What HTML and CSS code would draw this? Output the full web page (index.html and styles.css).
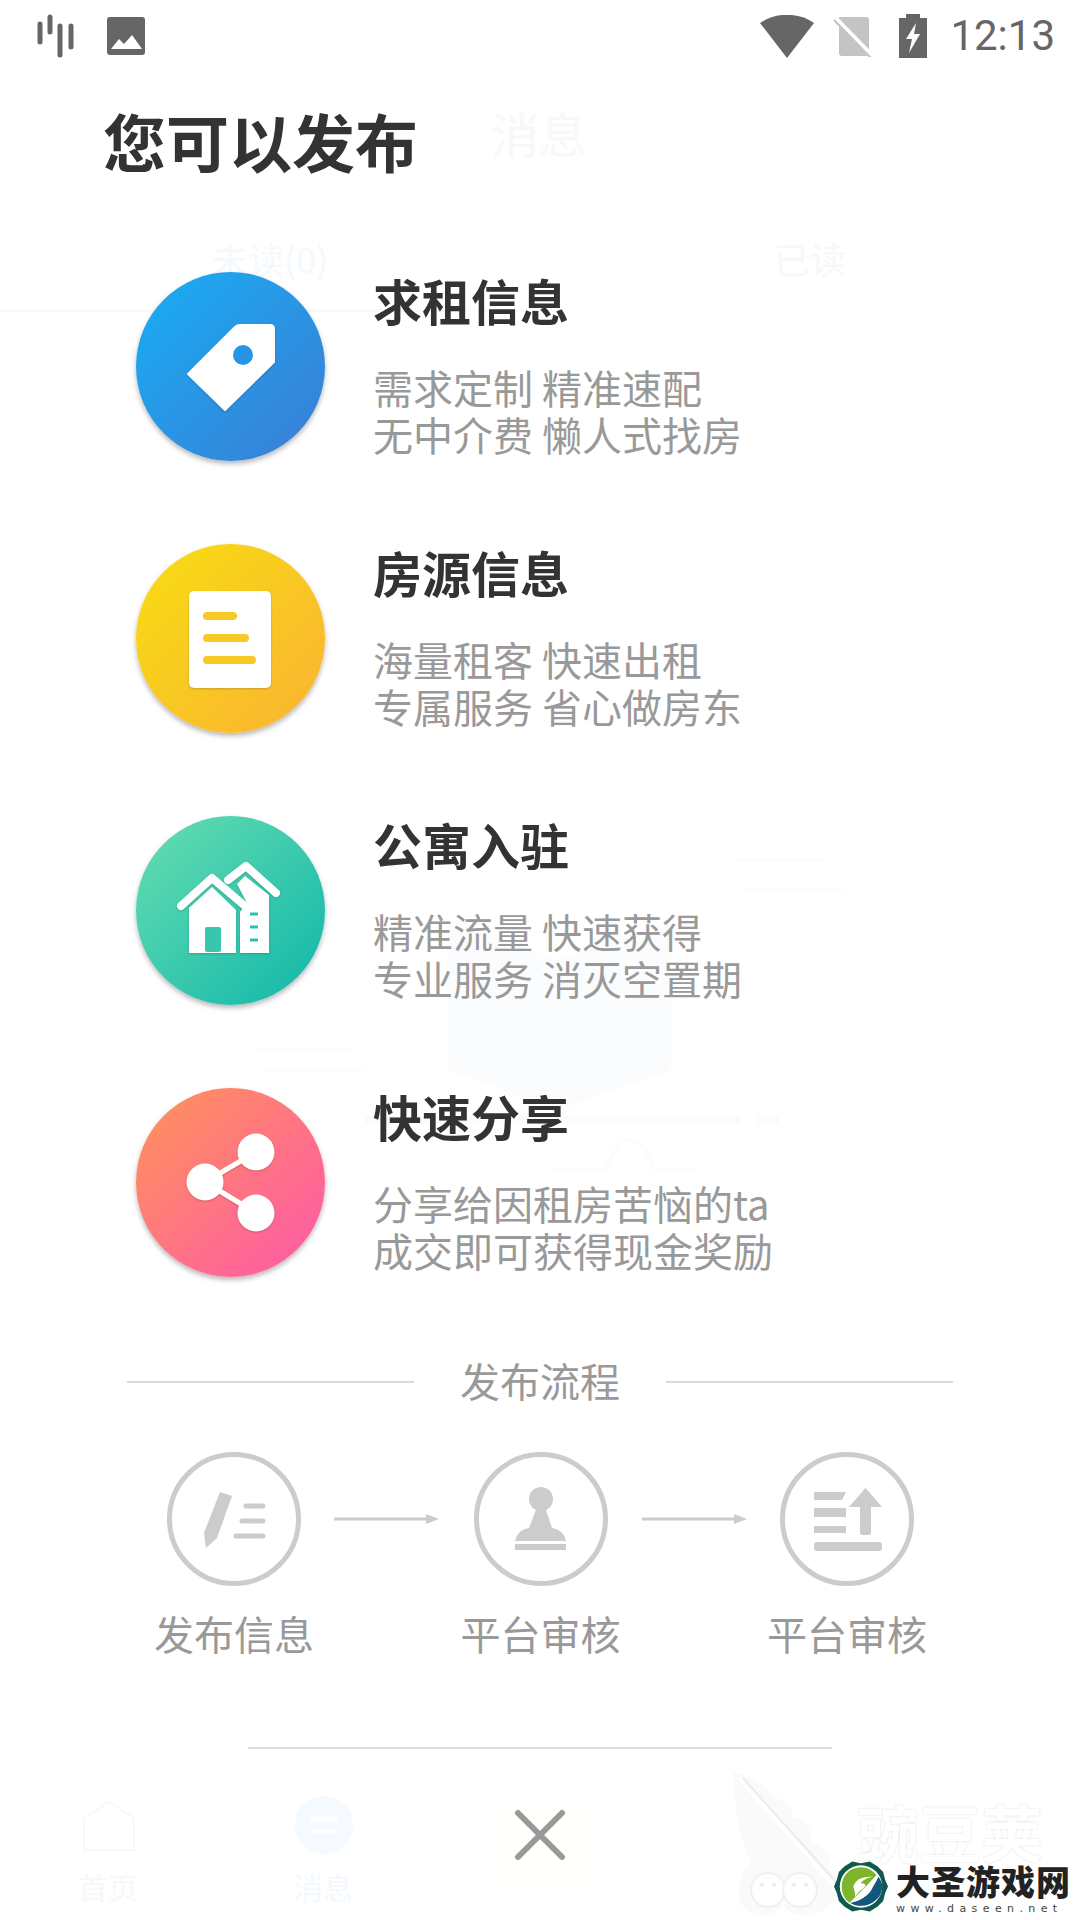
FILE: index.html
```html
<!DOCTYPE html>
<html lang="zh">
<head>
<meta charset="utf-8">
<title>您可以发布</title>
<link rel="stylesheet" href="styles.css">
</head>
<body>
<div class="page">
  <div class="ghost" aria-hidden="true">
    <span class="g g-title">消息</span>
    <span class="g g-unread">未读(0)</span>
    <span class="g g-read">已读</span>
    <div class="g g-tabline"></div>
    <svg class="g g-box" viewBox="0 0 640 400">
      <path d="M192 90V240L304 280L416 240V90L304 130Z" fill="#fbfcfe"/>
      <path d="M192 90L290 130L304 110L330 135L416 90" fill="none" stroke="#fdfdfe" stroke-width="3"/>
      <path d="M110 290H486M503 290H524" stroke="#fafbfd" stroke-width="8"/>
      <path d="M0 220H100M10 240H110" stroke="#fdfdfd" stroke-width="4"/>
      <path d="M480 30H570M490 60H590" stroke="#fdfdfd" stroke-width="4"/>
      <path d="M300 340H350Q362 310 375 310Q388 310 400 340H440" fill="none" stroke="#fcfcfd" stroke-width="3"/>
    </svg>
    <svg class="g g-home" viewBox="0 0 54 52"><path d="M2 50V18L27 2L52 18V50Z" fill="none" stroke="#f8f8f8" stroke-width="2"/></svg>
    <span class="g g-home-t">首页</span>
    <div class="g g-msg"><i></i><i></i></div>
    <span class="g g-msg-t">消息</span>
    <div class="g g-cream"></div>
    <svg class="g g-pod" viewBox="0 0 120 150">
      <path d="M1 2C1 40 6 70 18 90C10 100 4 110 6 130C14 150 40 150 50 135C60 150 90 150 100 130L112 136C112 120 108 104 96 100C100 84 90 74 78 72C80 58 70 48 60 48C60 36 50 28 40 28C36 16 20 8 1 2Z" fill="#fafafa"/>
      <path d="M6 8L110 126" stroke="#fff" stroke-width="4"/>
      <path d="M10 8L112 122" stroke="#ececec" stroke-width="2"/>
      <circle cx="35" cy="120" r="17" fill="#fff" stroke="#f0f0f0" stroke-width="2"/>
      <circle cx="67" cy="120" r="17" fill="#fff" stroke="#f0f0f0" stroke-width="2"/>
      <g fill="#ededed"><circle cx="29" cy="115" r="2"/><circle cx="41" cy="115" r="2"/><circle cx="61" cy="115" r="2"/><circle cx="73" cy="115" r="2"/></g>
    </svg>
    <span class="g g-wdj">豌豆荚</span>
  </div>

  <header class="status">
    <div class="status-left">
      <svg width="42" height="44" viewBox="0 0 42 44"><g stroke="#666" stroke-width="5" stroke-linecap="round"><path d="M3 10V28M13 3V18M23 12V41M34 12V33"/></g></svg>
      <svg width="38" height="38" viewBox="0 0 38 38"><rect width="38" height="38" rx="3" fill="#666"/><path d="M4 32L12 22L17 27L25 18L35 32Z" fill="#fff"/></svg>
    </div>
    <div class="status-right">
      <svg width="54" height="43" viewBox="0 0 54 43"><path d="M0 8C15 -3 39 -3 54 8L27 43Z" fill="#666"/></svg>
      <svg width="40" height="42" viewBox="0 0 40 42"><path d="M5 2H32a3 3 0 0 1 3 3V38a3 3 0 0 1-3 3H8a3 3 0 0 1-3-3Z" fill="#c4c4c4"/><path d="M1 3L38 41" stroke="#fff" stroke-width="5"/><path d="M0 5L37 43" stroke="#c4c4c4" stroke-width="2"/></svg>
      <svg class="ic-batt" width="28" height="44" viewBox="0 0 28 44"><path d="M7 0H21V4H28V44H0V4H7Z" fill="#666"/><path d="M17 9L7 25H13L10 39L21 20H15Z" fill="#fff"/></svg>
      <span class="time">12:13</span>
    </div>
  </header>

  <h1 class="title">您可以发布</h1>

  <section class="rows">
    <article class="row">
      <svg class="badge badge-blue" viewBox="0 0 189 189"><g class="glyph"><path d="M52 102L99 55Q101 53 104 53H134Q138 53 138 57V90L89 138Z" fill="#fff" stroke="#fff" stroke-width="2" stroke-linejoin="round"/><circle cx="107" cy="83" r="10" fill="#2596e6"/></g></svg>
      <div class="row-text">
        <h2>求租信息</h2>
        <p>需求定制 精准速配<br>无中介费 懒人式找房</p>
      </div>
    </article>
    <article class="row">
      <svg class="badge badge-yellow" viewBox="0 0 189 189"><g class="glyph"><rect x="53" y="47" width="82" height="97" rx="5" fill="#fff"/><g stroke="#f8c824" stroke-width="8" stroke-linecap="round"><path d="M71 72H97M71 94H109M71 116H116"/></g></g></svg>
      <div class="row-text">
        <h2>房源信息</h2>
        <p>海量租客 快速出租<br>专属服务 省心做房东</p>
      </div>
    </article>
    <article class="row">
      <svg class="badge badge-teal" viewBox="0 0 189 189"><g class="glyph"><g fill="#fff"><path d="M104 137H133V79L109 60L101 68L111 87L104 96Z"/><path d="M53 137H100V94L76 71L53 92Z"/></g><rect x="69" y="111" width="16" height="25" rx="2" fill="#38c6ad"/><g fill="none" stroke="#fff" stroke-width="8" stroke-linecap="round" stroke-linejoin="round"><path d="M92 64L110 50L140 77"/><path d="M45 90L76 62L109 90"/></g><g stroke="#2cc2ae" stroke-width="3"><path d="M114 98H122M114 111H122M114 124H122"/></g></g></svg>
      <div class="row-text">
        <h2>公寓入驻</h2>
        <p>精准流量 快速获得<br>专业服务 消灭空置期</p>
      </div>
    </article>
    <article class="row">
      <svg class="badge badge-pink" viewBox="0 0 189 189"><g class="glyph"><g stroke="#fff" stroke-width="5"><path d="M69 94L120 64M69 94L120 125"/></g><g fill="#fff"><circle cx="120" cy="64" r="18.5"/><circle cx="69" cy="94" r="18.5"/><circle cx="120" cy="125" r="18.5"/></g></g></svg>
      <div class="row-text">
        <h2>快速分享</h2>
        <p>分享给因租房苦恼的ta<br>成交即可获得现金奖励</p>
      </div>
    </article>
  </section>

  <div class="flow-head"><span class="rule"></span><span class="flow-title">发布流程</span><span class="rule"></span></div>

  <section class="steps">
    <div class="step">
      <svg class="step-ic" viewBox="0 0 134 134"><circle cx="67" cy="67" r="64.5" fill="none" stroke="#ccc" stroke-width="5"/><path d="M53 40L65 44L50 86L39 96L37 81Z" fill="#ccc"/><g stroke="#ccc" stroke-width="5" stroke-linecap="round"><path d="M79 54H96M75 69H96M69 84H96"/></g></svg>
      <span class="step-label">发布信息</span>
    </div>
    <svg class="arrow" viewBox="0 0 105 10"><path d="M0 3.5H92V0L105 5L92 10V6.5H0Z" fill="#ccc"/></svg>
    <div class="step step-mid">
      <svg class="step-ic" viewBox="0 0 134 134"><circle cx="67" cy="67" r="64.5" fill="none" stroke="#ccc" stroke-width="5"/><circle cx="67" cy="47" r="12" fill="#ccc"/><path d="M63 55L55 76Q43 78 41 89H92Q90 78 78 76L71 55Z" fill="#ccc"/><rect x="41" y="92" width="51" height="6" fill="#ccc"/></svg>
      <span class="step-label">平台审核</span>
    </div>
    <svg class="arrow" viewBox="0 0 105 10"><path d="M0 3.5H92V0L105 5L92 10V6.5H0Z" fill="#ccc"/></svg>
    <div class="step">
      <svg class="step-ic" viewBox="0 0 134 134"><circle cx="67" cy="67" r="64.5" fill="none" stroke="#ccc" stroke-width="5"/><path d="M34 40H66L62 48H34ZM34 56H66V65H34ZM34 74H66V81H34Z" fill="#ccc"/><rect x="34" y="90" width="68" height="9" rx="3" fill="#ccc"/><path d="M85.5 36L102 55H91V81Q91 83 89 83H82Q80 83 80 81V55H69Z" fill="#ccc"/></svg>
      <span class="step-label">平台审核</span>
    </div>
  </section>

  <footer class="close-bar">
    <svg width="52" height="52" viewBox="0 0 52 52"><path d="M4 4L48 48M48 4L4 48" stroke="#999" stroke-width="6" stroke-linecap="round"/></svg>
  </footer>

  <div class="mark">
    <svg width="54" height="53" viewBox="0 0 56 54">
      <path d="M19 1L28 3L37 1L45 6L51 12L53 20L56 27L53 34L51 42L45 48L37 53L28 51L19 53L11 48L5 42L3 34L0 27L3 20L5 12L11 6Z" fill="#0e5a4c"/>
      <circle cx="28" cy="27" r="22" fill="#fff"/>
      <path d="M28 7C16 7 8 16 8 27C8 34 11 40 16 44C24 36 36 24 44 15C40 10 34 7 28 7Z" fill="#7db52c"/>
      <path d="M46 17C49 21 50 24 50 27C50 38 40 47 28 47C24 47 20 46 17 44C27 42 36 36 39 30C41 26 44 22 46 17Z" fill="#12587e"/>
      <path d="M20 27C22 20 30 16 40 17C32 19 28 22 28 24C33 23 34 26 30 29C26 32 24 34 22 38C22 33 21 30 20 27Z" fill="#fff"/>
    </svg>
    <div class="mark-text">
      <strong>大圣游戏网</strong>
      <span>www.daseen.net</span>
    </div>
  </div>
</div>
</body>
</html>
```

FILE: styles.css
```css
* { box-sizing: border-box; }
html, body { margin: 0; padding: 0; background: #fff; }
body { font-family: "Noto Sans CJK SC", "Noto Sans", sans-serif; }
h1, h2, p { margin: 0; }

.page { position: relative; width: 1080px; height: 1920px; overflow: hidden; background: #fff; }

/* Faint page behind the translucent sheet */
.ghost { position: absolute; inset: 0; }
.g { position: absolute; }
.g-title { left: 491px; top: 97px; font-size: 48px; line-height: 70px; color: #f8f8f9; }
.g-unread { left: 212px; top: 233px; font-size: 36px; line-height: 50px; color: #f4f9fd; }
.g-read { left: 774px; top: 233px; font-size: 36px; line-height: 50px; color: #f8f8f8; }
.g-tabline { left: 0; top: 309px; width: 540px; height: 3px; background: #f5fbff; }
.g-box { left: 255px; top: 830px; width: 640px; height: 400px; }
.g-home { left: 82px; top: 1800px; width: 54px; height: 52px; }
.g-home-t { left: 78px; top: 1866px; font-size: 30px; line-height: 40px; color: #f8f8f8; }
.g-msg { left: 295px; top: 1796px; width: 58px; height: 58px; border-radius: 50%; background: #f4faff; display: flex; flex-direction: column; align-items: center; justify-content: center; gap: 7px; }
.g-msg i { display: block; width: 26px; height: 5px; background: #fff; }
.g-msg-t { left: 293px; top: 1866px; font-size: 30px; line-height: 40px; color: #f4f9fd; }
.g-cream { left: 498px; top: 1806px; width: 85px; height: 84px; background: #fffffb; }
.g-pod { left: 733px; top: 1770px; width: 120px; height: 150px; }
.g-wdj { left: 857px; top: 1786px; font-size: 62px; line-height: 90px; font-weight: 700; color: #fff; text-shadow: 0 0 2px rgba(0,0,0,.16); }

/* Status bar */
.status { position: relative; height: 72px; display: flex; justify-content: space-between; align-items: center; padding: 0 25px 0 37px; }
.status-left { display: flex; align-items: center; gap: 28px; }
.status-right { display: flex; align-items: center; gap: 20px; }
.ic-batt { margin-left: 5px; }
.time { font-family: Roboto, sans-serif; font-size: 42px; line-height: 50px; color: #666; margin-left: 3px; }

/* Heading */
.title { position: relative; margin: 24px 0 0 103px; font-size: 63px; line-height: 88px; font-weight: 700; color: #333; }

/* Feature rows */
.rows { position: relative; margin-top: 88px; padding-left: 136px; display: flex; flex-direction: column; gap: 83px; }
.row { display: flex; gap: 48px; height: 189px; }
.badge { width: 189px; height: 189px; border-radius: 50%; flex: none; box-shadow: 0 3px 5px rgba(0,0,0,.28); filter: blur(.4px); }
.badge-blue { background: linear-gradient(135deg, #18aef5, #3b7dd4); }
.badge-yellow { background: linear-gradient(135deg, #f8de12, #fab233); }
.badge-teal { background: linear-gradient(135deg, #68deb0, #0fb6ab); }
.badge-pink { background: linear-gradient(135deg, #ff9458, #ff57ab); }
.glyph { filter: drop-shadow(0 1px 1px rgba(0,0,0,.18)); }
.row-text h2 { font-size: 49px; line-height: 56px; font-weight: 700; color: #333; }
.row-text p { margin-top: 36px; font-size: 40px; line-height: 47px; color: #999; white-space: nowrap; }

/* Process */
.flow-head { position: relative; margin: 80px 127px 0; height: 50px; display: flex; align-items: center; justify-content: space-between; }
.rule { width: 287px; height: 2px; background: #d9d9d9; }
.flow-title { padding-bottom: 4px; font-size: 40px; line-height: 50px; color: #999; }
.steps { position: relative; margin-top: 45px; padding-left: 134px; display: flex; align-items: flex-start; }
.step { width: 200px; flex: none; display: flex; flex-direction: column; align-items: center; gap: 19px; }
.step-mid { width: 203px; }
.step-ic { width: 134px; height: 134px; }
.step-label { font-size: 40px; line-height: 56px; color: #999; white-space: nowrap; }
.arrow { width: 105px; height: 10px; margin-top: 62px; flex: none; }

/* Close */
.close-bar { position: absolute; left: 248px; top: 1747px; width: 584px; height: 173px; border-top: 2px solid #ddd; display: flex; justify-content: center; padding-top: 60px; }

/* Site watermark */
.mark { position: absolute; left: 834px; top: 1860px; display: flex; gap: 8px; }
.mark-text { display: flex; flex-direction: column; }
.mark-text strong { font-size: 34px; line-height: 42px; font-weight: 900; letter-spacing: 1px; color: #222; white-space: nowrap; }
.mark-text span { font-family: "DejaVu Sans", sans-serif; font-size: 11px; line-height: 14px; letter-spacing: 5.4px; color: #444; white-space: nowrap; }
```
